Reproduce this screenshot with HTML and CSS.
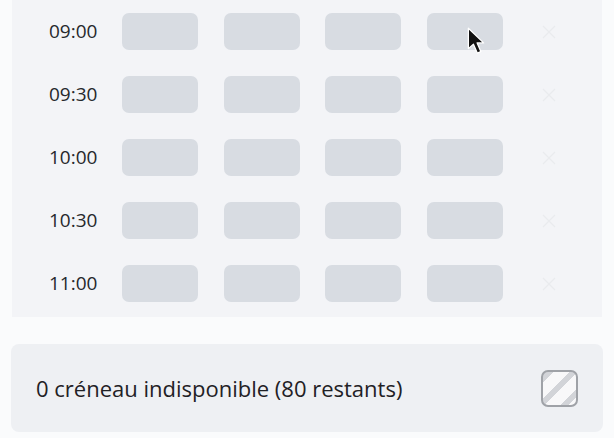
FILE: index.html
```html
<!DOCTYPE html>
<html lang="fr">
<head>
<meta charset="utf-8">
<link rel="stylesheet" href="styles.css">
</head>
<body>
<div class="grid-panel">
  <div class="row">
    <span class="time">09:00</span>
    <div class="slots"><div class="slot"></div><div class="slot"></div><div class="slot"></div><div class="slot"></div></div>
    <svg class="clear" viewBox="0 0 16 16"><path d="M2 2 L14 14 M14 2 L2 14"/></svg>
  </div>
  <div class="row">
    <span class="time">09:30</span>
    <div class="slots"><div class="slot"></div><div class="slot"></div><div class="slot"></div><div class="slot"></div></div>
    <svg class="clear" viewBox="0 0 16 16"><path d="M2 2 L14 14 M14 2 L2 14"/></svg>
  </div>
  <div class="row">
    <span class="time">10:00</span>
    <div class="slots"><div class="slot"></div><div class="slot"></div><div class="slot"></div><div class="slot"></div></div>
    <svg class="clear" viewBox="0 0 16 16"><path d="M2 2 L14 14 M14 2 L2 14"/></svg>
  </div>
  <div class="row">
    <span class="time">10:30</span>
    <div class="slots"><div class="slot"></div><div class="slot"></div><div class="slot"></div><div class="slot"></div></div>
    <svg class="clear" viewBox="0 0 16 16"><path d="M2 2 L14 14 M14 2 L2 14"/></svg>
  </div>
  <div class="row">
    <span class="time">11:00</span>
    <div class="slots"><div class="slot"></div><div class="slot"></div><div class="slot"></div><div class="slot"></div></div>
    <svg class="clear" viewBox="0 0 16 16"><path d="M2 2 L14 14 M14 2 L2 14"/></svg>
  </div>
</div>
<div class="summary">
  <span class="summary-text">0 créneau indisponible (80 restants)</span>
  <span class="check"></span>
</div>
<svg class="cursor" viewBox="0 0 14 22"><path d="M1 1 L1 17 L5 13.5 L8 20.5 L10.8 19.3 L7.9 12.5 L13 12.5 Z" fill="#111" stroke="#fff" stroke-width="1" stroke-linejoin="round"/></svg>
</body>
</html>
```
FILE: styles.css
```css
html, body {
  margin: 0;
  padding: 0;
}
body {
  background: #fafbfc;
  font-family: "Open Sans", "Noto Sans", sans-serif;
  color: #2b2d31;
  width: 614px;
  height: 438px;
  overflow: hidden;
  position: relative;
}
.grid-panel {
  margin-left: 12px;
  width: 590px;
  height: 317px;
  box-sizing: border-box;
  padding: 13px 0 0 37px;
  background: #f3f4f7;
  display: flex;
  flex-direction: column;
  gap: 26px;
}
.row {
  display: flex;
  align-items: center;
  height: 37px;
}
.time {
  width: 73px;
  font-size: 19px;
  line-height: 1;
  color: #26282c;
}
.slots {
  display: flex;
  gap: 25.6px;
}
.slot {
  width: 76px;
  height: 37px;
  border-radius: 7px;
  background: #d8dce2;
}
.clear {
  width: 16px;
  height: 16px;
  margin-left: 38px;
  fill: none;
  stroke: #e9ebee;
  stroke-width: 1.2;
}
.summary {
  margin: 27px 0 0 11px;
  width: 592px;
  height: 88px;
  box-sizing: border-box;
  padding: 0 25px;
  background: #eef0f3;
  border-radius: 8px;
  display: flex;
  align-items: center;
  justify-content: space-between;
}
.summary-text {
  font-size: 22px;
  color: #1f2125;
}
.check {
  width: 37px;
  height: 37px;
  box-sizing: border-box;
  border: 2px solid #9fa2a7;
  border-radius: 7px;
  background: repeating-linear-gradient(-45deg, #f8f8f9 0 5px, #d2d4d8 5px 11px, #f8f8f9 11px 17px);
  margin-top: 1px;
}
.cursor {
  position: absolute;
  left: 467px;
  top: 27px;
  width: 18px;
  height: 28px;
}
```
